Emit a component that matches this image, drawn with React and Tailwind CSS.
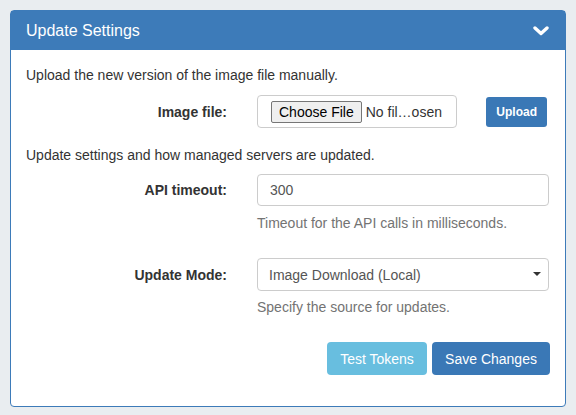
import React, { useState } from "react";

const Chevron = () => (
  <svg width="16" height="10" viewBox="0 0 16 10" className="block">
    <polyline
      points="2,2 8,7.5 14,2"
      fill="none"
      stroke="white"
      strokeWidth="3.4"
      strokeLinecap="round"
      strokeLinejoin="round"
    />
  </svg>
);

const UpdateSettings = () => {
  const [timeout, setTimeoutValue] = useState("300");
  const [mode, setMode] = useState("local");

  return (
    <div
      className="min-h-[415px] bg-[#e9edf0] pt-[10px] pl-[10px] pr-[10px] text-[14px] leading-[20px] text-[#333]"
      style={{ fontFamily: '"Liberation Sans", Arial, sans-serif' }}
    >
      <div className="rounded-[4px] border border-[#3d7bb9] bg-white">
        {/* Header */}
        <div className="flex h-[39px] items-center justify-between bg-[#3d7bb9] pl-[15px] pr-[16px] text-[16px] text-white">
          <span>Update Settings</span>
          <Chevron />
        </div>

        {/* Body */}
        <div className="pl-[15px] pr-[15px] pt-[15px] pb-[31px]">
          <p>Upload the new version of the image file manually.</p>

          <div className="mt-[10px] flex items-center">
            <label className="w-[201px] text-right font-bold">Image file:</label>
            <div className="ml-[30px] flex h-[33px] w-[200px] items-center rounded-[4px] border border-[#ccc] pl-[13px]">
              <button className="h-[22px] rounded-[2px] border border-[#767676] bg-[#efefef] px-[7px] text-[14px] leading-[20px] text-black">
                Choose File
              </button>
              <span className="ml-[4px] text-[#333]">No fil…osen</span>
            </div>
            <button className="ml-auto mr-[3px] h-[30px] rounded-[3px] bg-[#3a78b6] px-[10px] text-[12px] font-bold text-white">
              Upload
            </button>
          </div>

          <p className="mt-[17px]">Update settings and how managed servers are updated.</p>

          <div className="mt-[9px] flex items-center">
            <label className="w-[201px] text-right font-bold">API timeout:</label>
            <input
              value={timeout}
              onChange={(e) => setTimeoutValue(e.target.value)}
              className="ml-[30px] h-[32px] flex-1 rounded-[4px] border border-[#ccc] px-[12px] text-[14px] text-[#555] outline-none"
            />
            <span className="w-[1px]" />
          </div>
          <p className="ml-[231px] mt-[7px] text-[#737373]">Timeout for the API calls in milliseconds.</p>

          <div className="mt-[25px] flex items-center">
            <label className="w-[201px] text-right font-bold">Update Mode:</label>
            <div className="relative ml-[30px] flex-1">
              <select
                value={mode}
                onChange={(e) => setMode(e.target.value)}
                className="h-[33px] w-full appearance-none rounded-[4px] border border-[#ccc] bg-white pl-[11px] pr-[24px] text-[14px] text-[#555] outline-none"
              >
                <option value="local">Image Download (Local)</option>
                <option value="remote">Image Download (Remote)</option>
              </select>
              <svg
                width="8"
                height="4"
                viewBox="0 0 8 4"
                className="pointer-events-none absolute right-[8px] top-[14px]"
              >
                <polygon points="0,0 8,0 4,4" fill="#333" />
              </svg>
            </div>
            <span className="w-[1px]" />
          </div>
          <p className="ml-[231px] mt-[6px] text-[#737373]">Specify the source for updates.</p>

          <div className="mt-[25px] flex justify-end gap-[5px]">
            <button className="h-[33px] w-[100px] rounded-[4px] bg-[#68bedf] text-white">
              Test Tokens
            </button>
            <button className="h-[33px] w-[118px] rounded-[4px] bg-[#3a78b6] text-white">
              Save Changes
            </button>
          </div>
        </div>
      </div>
    </div>
  );
};

export default function App() {
  return <UpdateSettings />;
}
